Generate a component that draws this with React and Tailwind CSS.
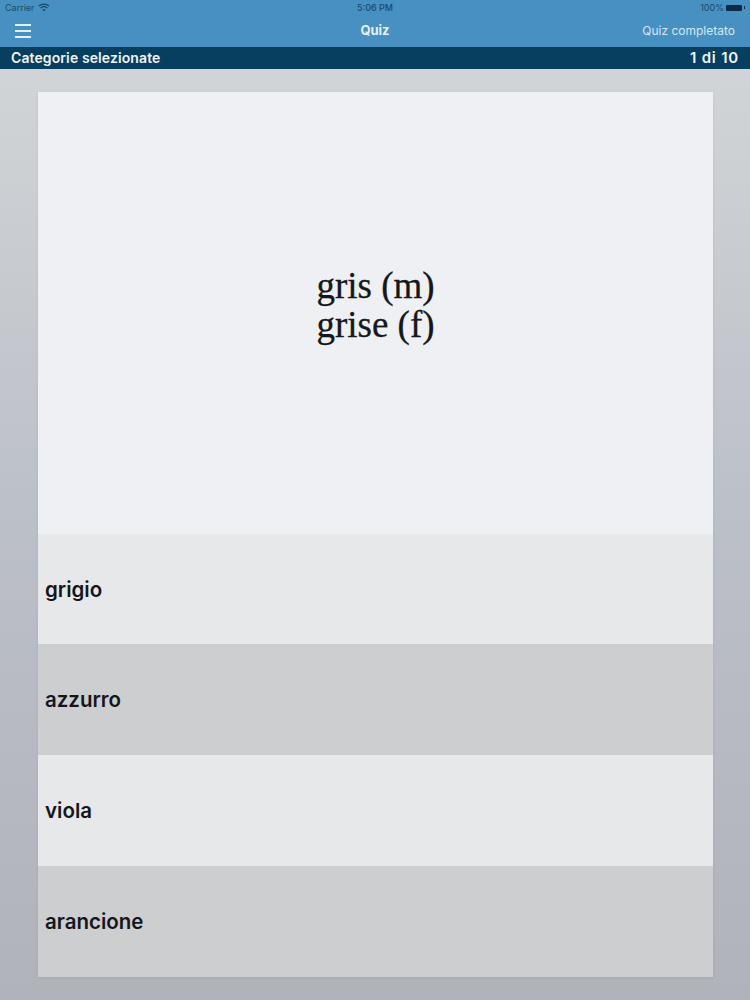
import React from 'react'

const answers = [
  { label: 'grigio', bg: 'bg-[#e6e8e9]', h: 'h-[110px]' },
  { label: 'azzurro', bg: 'bg-[#cccecf]', h: 'h-[111px]' },
  { label: 'viola', bg: 'bg-[#e6e8e9]', h: 'h-[111px]' },
  { label: 'arancione', bg: 'bg-[#cccecf]', h: 'h-[111px]' },
]

function Wifi() {
  return (
    <svg width="12" height="9" viewBox="0 0 12 9" fill="none" stroke="#1d4a6e" strokeWidth="1.3">
      <path d="M0.8 3 C3.8 0.4 8.2 0.4 11.2 3" />
      <path d="M2.6 4.9 C4.6 3.3 7.4 3.3 9.4 4.9" />
      <path d="M6 8.4 L4.4 6.6 C5.4 5.9 6.6 5.9 7.6 6.6 Z" fill="#1d4a6e" stroke="none" />
    </svg>
  )
}

export default function App() {
  return (
    <div
      className="w-[750px] h-[1000px] flex flex-col overflow-hidden bg-gradient-to-b from-[#d5d8d9] via-[#bcc0c8] to-[#b1b3bb]"
      style={{ fontFamily: 'Inter, sans-serif' }}
    >
      {/* Status bar + nav */}
      <div className="h-[47px] bg-[#4790c2] flex flex-col shrink-0">
        <div className="h-[15px] px-[5px] grid grid-cols-3 items-center text-[9px] text-[#1d4a6e]">
          <div className="flex items-center gap-[3px]">
            <span>Carrier</span>
            <Wifi />
          </div>
          <div className="text-center font-medium">5:06 PM</div>
          <div className="flex items-center justify-end gap-[2px]">
            <span>100%</span>
            <span className="w-[16px] h-[6px] rounded-[1px] bg-[#0d2b46]" />
            <span className="w-[1px] h-[3px] bg-[#0d2b46]" />
          </div>
        </div>
        <div className="flex-1 px-[15px] grid grid-cols-3 items-center pb-[1px]">
          <div className="flex flex-col gap-[4px] w-[16px]">
            <span className="h-[2px] bg-[#e3eff6]" />
            <span className="h-[2px] bg-[#e3eff6]" />
            <span className="h-[2px] bg-[#e3eff6]" />
          </div>
          <div className="text-center text-[13px] font-bold text-[#e3eff6]">Quiz</div>
          <div className="text-right text-[12px] text-[#d3e6f2]">Quiz completato</div>
        </div>
      </div>

      {/* Category bar */}
      <div className="h-[22px] bg-[#073f60] flex items-center justify-between px-[11px] shrink-0 text-[#eef4f7] text-[14px] font-semibold">
        <span className="pb-[1px] tracking-[0.1px]">Categorie selezionate</span>
        <span className="text-[15px] tracking-[0.8px]">1 di 10</span>
      </div>

      {/* Card */}
      <div className="mt-[23px] ml-[38px] w-[675px] flex flex-col shadow-[0_1px_3px_rgba(0,0,0,0.08)]">
        <div
          className="h-[442px] bg-[#eef0f4] flex items-center justify-center text-center text-[37px] leading-[39px] text-[#15171a] pb-[16px] [-webkit-text-stroke:0.3px_#15171a]"
          style={{ fontFamily: '"Liberation Serif", serif' }}
        >
          <div>
            gris (m)
            <br />
            grise (f)
          </div>
        </div>
        {answers.map((a) => (
          <div key={a.label} className={`${a.bg} ${a.h} flex items-center px-[7px] pt-[2px] text-[20.5px] font-semibold text-[#14161a]`}>
            {a.label}
          </div>
        ))}
      </div>
    </div>
  )
}
